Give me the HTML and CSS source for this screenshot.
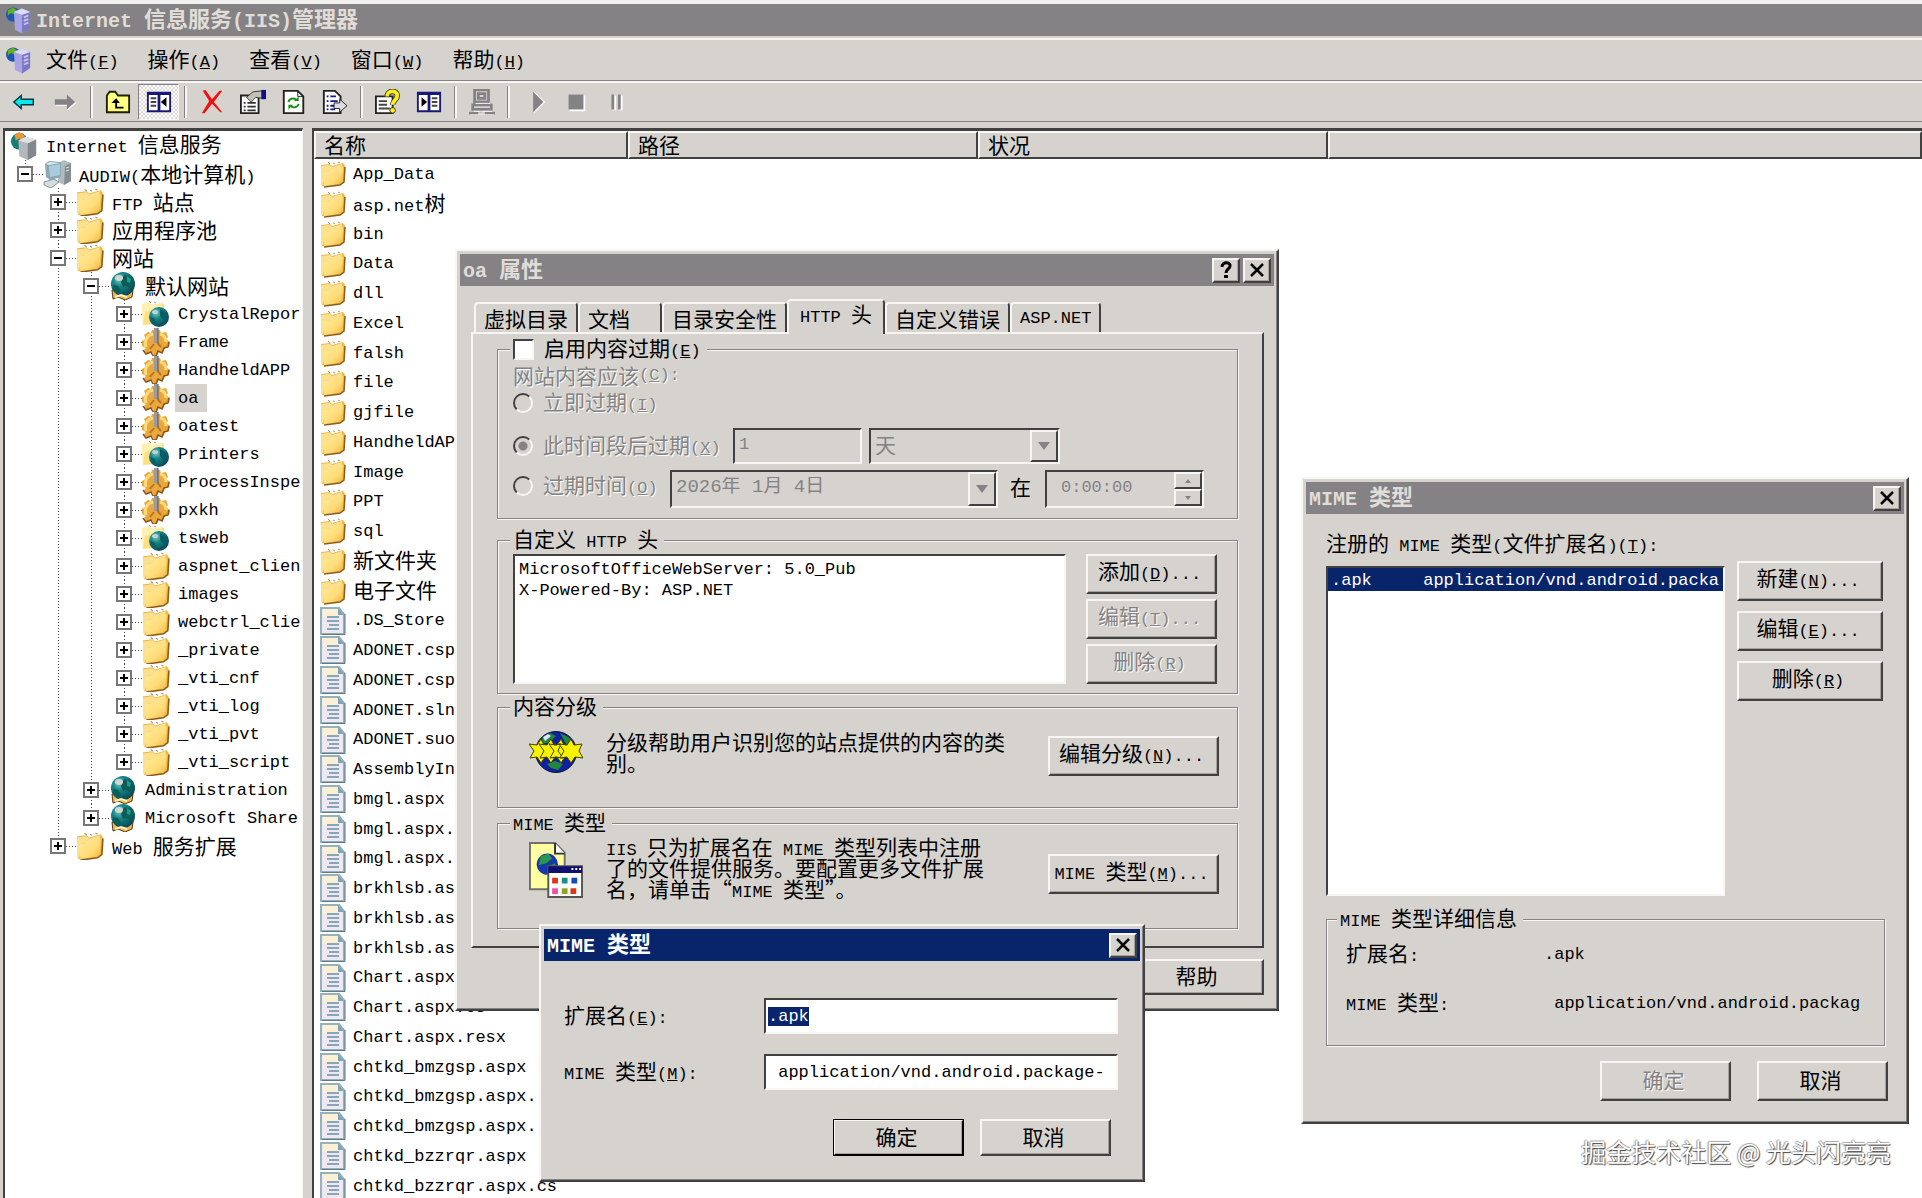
FILE: index.html
```html
<!DOCTYPE html>
<html lang="zh-CN">
<head>
<meta charset="utf-8">
<title>Internet 信息服务(IIS)管理器</title>
<link rel="stylesheet" href="styles.css">
</head>
<body>
<svg class="sprites" aria-hidden="true">
  <defs>
    <linearGradient id="gold" x1="0" y1="0" x2="1" y2="1"><stop offset="0" stop-color="#ffec9c"/><stop offset=".6" stop-color="#ffdc78"/><stop offset="1" stop-color="#f0b440"/></linearGradient>
    <radialGradient id="sea" cx=".35" cy=".3" r=".8"><stop offset="0" stop-color="#8cc4c0"/><stop offset=".35" stop-color="#14888a"/><stop offset="1" stop-color="#083c4c"/></radialGradient>
    <symbol id="folder" viewBox="0 0 26 26">
      <path d="M1 4l9-1 2 2 11-3 2 3-1 16-4 3L2 25z" fill="#f0b848"/>
      <path d="M1 5l9-1 2 2 10-3v5L6 11 3 24H1z" fill="#fbe090"/>
      <path d="M3 12l7-2 2-2 11-2-1 14-3 3-15 2z" fill="url(#gold)"/>
      <path d="M25 6l-1 15-4 3-16 2" fill="none" stroke="#8c5c18" stroke-width="1.500"/>
      <path d="M8 1l2 2M13 2l2 1M18 1l2 1" stroke="#a89868"/>
    </symbol>
    <symbol id="globe" viewBox="0 0 28 28">
      <path d="M3 18l1 9 5-2 7 3 7-3 1-7z" fill="#f0b848" stroke="#50381c"/>
      <circle cx="14" cy="12" r="12" fill="url(#sea)"/>
      <path d="M15 3l7 2 3 7-4 4-4-2-3 1-2-5zM4 13l5 1 3 5-4 2-4-4z" fill="#0c5c58"/>
      <path d="M18 4l4 3-1 4-3-1z" fill="#1c9c88"/>
      <ellipse cx="10" cy="6" rx="4" ry="3" fill="#cfd6d4"/>
      <path d="M6 25l6-2 6 2" stroke="#fff0c0" stroke-width="2" fill="none"/>
    </symbol>
    <symbol id="webfolder" viewBox="0 0 28 28">
      <path d="M0 4l8-1 3 2 9-2 2 1v17l-6 3-15 1z" fill="#ffdf80"/>
      <path d="M0 4l8-1 3 2 9-2v4L3 12l-2 12z" fill="#fff0b4"/><path d="M7 1l2 2M12 2l2 1" stroke="#a89868"/>
      <circle cx="17" cy="17" r="10" fill="url(#sea)"/>
      <path d="M18 9l6 4 2 5-4 3-4-5zM8 17l5 2 1 5-4-1z" fill="#0b5c64"/>
      <ellipse cx="13" cy="12" rx="3" ry="2" fill="#b8d4d4"/>
    </symbol>
    <symbol id="gear" viewBox="0 0 28 28">
      <path d="M10 2h8l1 3 5-1 2 5-2 2 4 3-1 5-4 1-2 5-4-2-2 5h-3l-2-4-5 2-3-4 2-2-4-2v-5l4-2-2-4 4-3 3 1z" fill="#e9a83c"/>
      <path d="M27 14l-1 5-4 1-2 5-4-2-2 5h-3l-2-4-5 2-3-4" fill="none" stroke="#8a5418" stroke-width="1.500"/>
      <path d="M4 19c-2-6 1-12 7-13M18 6c4 1 6 4 6 8" fill="none" stroke="#ffda7c" stroke-width="3"/>
      <path d="M14 13l5 6M12 16l-4 5" stroke="#b87420" stroke-width="2"/>
      <path d="M12 0h4v15h-4z" fill="#9a9aa4"/><path d="M16 0v15" stroke="#54545c"/>
    </symbol>
    <symbol id="file" viewBox="0 0 26 28">
      <path d="M1 1h18l5 6v20H1z" fill="#efe8f0" stroke="#93b2bc" stroke-width="2"/>
      <path d="M3 2h15v8H3z" fill="#fbf0d4"/><path d="M18 1v7h6z" fill="#7fa2b4"/>
      <path d="M7 10h12M7 14h12M9 18h10M7 22h12" stroke="#86a6ba" stroke-width="2"/>
      <path d="M25 7v20.500H2" fill="none" stroke="#607888"/>
    </symbol>
    <symbol id="server" viewBox="0 0 28 30">
      <circle cx="8" cy="9" r="8" fill="#1f56b0"/><path d="M2 4l6-3 5 4-4 4-3-2-4 3z" fill="#60b020"/>
      <path d="M9 6l9-4 9 4v18l-9 6-8-4z" fill="#a9a4e4"/><path d="M18 9l9-3v18l-9 6z" fill="#7d78c4"/><path d="M9 6l9-4 9 4-9 3z" fill="#dcdcfa"/>
      <path d="M20 12l5-2M20 16l5-2M20 20l5-2" stroke="#c8c6f0" stroke-width="2"/>
    </symbol>
    <symbol id="iisroot" viewBox="0 0 28 30">
      <circle cx="9" cy="10" r="9" fill="#167c78"/><path d="M4 3l5-3 6 4-3 5-3-2-4 2z" fill="#e89838"/>
      <path d="M8 9l8-4 11 3v17l-9 5-9-4z" fill="#b4b8bc"/><path d="M18 12l9-4v17l-9 5z" fill="#84888c"/><path d="M8 9l8-4 11 3-9 4z" fill="#dfe2e4"/>
    </symbol>
    <symbol id="pc" viewBox="0 0 28 28">
      <path d="M16 3l5-3 7 3v18l-7 4-6-3z" fill="#b2bcc0"/><path d="M22 6l6-3v18l-7 4z" fill="#848e92"/><path d="M23 8l3-1M23 11l3-1" stroke="#e4e8ea"/>
      <path d="M2 4l4-3 12 1v15l-11 3-4-3z" fill="#8ca8b4"/><path d="M6 6l11-2v11L7 17z" fill="#a8ccdc"/><path d="M3 4l4-2 10 1-11 2z" fill="#dce8ec"/>
      <path d="M1 22l10-3 5 3-8 6-7-3z" fill="#d4dce0" stroke="#8494a0"/>
    </symbol>
  </defs>
</svg>

<div class="app">
  <header class="app-title">
    <svg class="app-icon"><use href="#server"/></svg>
    <h1>Internet <span class="zh">信息服务</span>(IIS)<span class="zh">管理器</span></h1>
  </header>

  <nav class="menu">
    <svg class="app-icon"><use href="#server"/></svg>
    <button><span class="zh">文件</span>(<u>F</u>)</button>
    <button><span class="zh">操作</span>(<u>A</u>)</button>
    <button><span class="zh">查看</span>(<u>V</u>)</button>
    <button><span class="zh">窗口</span>(<u>W</u>)</button>
    <button><span class="zh">帮助</span>(<u>H</u>)</button>
  </nav>

  <div class="toolbar" role="toolbar">
    <button aria-label="后退"><svg viewBox="0 0 28 28"><path d="M3 14l8-7v4h13v6H11v4z" fill="#00e8f0" stroke="#00343c" stroke-width="1.500"/></svg></button>
    <button aria-label="前进"><svg viewBox="0 0 28 28"><path d="M26 15l-9-8v5H4v6h13v5z" fill="#fff"/><path d="M25 14l-9-8v5H3v6h13v5z" fill="#848284"/></svg></button>
    <i class="sep"></i>
    <button aria-label="向上"><svg viewBox="0 0 28 28"><path d="M2 25V7l3-4h6l3 4h12v18z" fill="#ffff84" stroke="#202000" stroke-width="2"/><path d="M7 15l5-5 4 5h-3v4h7v2h-9v-6z" fill="#000"/></svg></button>
    <button class="pressed" aria-label="显示树"><svg viewBox="0 0 28 28"><path d="M2 4h24v20H2z" fill="#fff" stroke="#181878" stroke-width="2"/><path d="M2 5h24M14 4v20" stroke="#181878" stroke-width="3"/><path d="M5 10h6M5 14h6M5 18h6" stroke="#444" stroke-width="2"/><path d="M22 9v10l-6-5z"/></svg></button>
    <i class="sep"></i>
    <button aria-label="删除"><svg viewBox="0 0 28 28"><path d="M4 2l3-1 7 10 8-9h3l-9 12 9 11h-2l-9-9-8 10H3l8-13z" fill="#f01010"/></svg></button>
    <button aria-label="属性"><svg viewBox="0 0 28 28"><path d="M1 7h19v19H1z" fill="#fff" stroke="#222" stroke-width="2"/><path d="M4 15h2M8 15h9M4 19h2M8 19h9M4 23h2M8 23h9" stroke="#333" stroke-width="2"/><path d="M7 9l7-6 10-1v8l-7-1-5 5z" fill="#c4c0b8" stroke="#333"/><path d="M23 1h5v10h-5z" fill="#101080"/></svg></button>
    <button aria-label="刷新"><svg viewBox="0 0 28 28"><path d="M3 2h15l6 6v18H3z" fill="#fff" stroke="#222" stroke-width="2"/><path d="M18 2v6h6" fill="none" stroke="#222"/><path d="M8 14c1-4 6-5 9-2M19 16c-1 4-6 5-9 2" fill="none" stroke="#149014" stroke-width="2"/><path d="M14 13h5V8zM13 17H8v5z" fill="#149014"/></svg></button>
    <button aria-label="导出列表"><svg viewBox="0 0 28 28"><path d="M2 2h12l6 6v18H2z" fill="#fff" stroke="#222" stroke-width="2"/><path d="M5 8h2M5 13h2M5 18h2M5 22h2M9 8h6M9 13h8M9 18h5M9 22h5" stroke="#181880" stroke-width="2"/><path d="M13 15h6v-4l8 7-8 7v-4h-6z" fill="#ddd" stroke="#222"/></svg></button>
    <i class="sep"></i>
    <button aria-label="帮助"><svg viewBox="0 0 28 28"><path d="M1 8h18v18H1z" fill="#fff" stroke="#222" stroke-width="2"/><path d="M4 13h9M4 17h9M4 21h12" stroke="#444" stroke-width="2"/><path d="M13 8c0-7 11-7 11-1 0 5-5 5-5 10" fill="none" stroke="#333" stroke-width="6"/><path d="M13 8c0-7 11-7 11-1 0 5-5 5-5 10" fill="none" stroke="#ffee10" stroke-width="4"/><circle cx="19" cy="23" r="3" fill="#ffee10" stroke="#333"/></svg></button>
    <button aria-label="操作窗格"><svg viewBox="0 0 28 28"><path d="M2 4h24v20H2z" fill="#fff" stroke="#181878" stroke-width="2"/><path d="M2 5h24M14 4v20" stroke="#181878" stroke-width="3"/><path d="M17 10h6M17 14h6M17 18h6" stroke="#444" stroke-width="2"/><path d="M6 9v10l6-5z"/></svg></button>
    <i class="sep"></i>
    <button aria-label="连接"><svg viewBox="0 0 28 28"><path d="M6 1h15v13H6zM4 17h20v5H4zM10 5h7v5h-7zM13 22v3M0 26h10M17 26h11" fill="none" stroke="#848284" stroke-width="3"/><path d="M7 15.500h16M5 24h20M1 28h26" stroke="#fff"/></svg></button>
    <i class="sep"></i>
    <button aria-label="启动"><svg viewBox="0 0 28 28"><path d="M13 3l12 11-12 12z" fill="#fff"/><path d="M12 3l11 11-11 11z" fill="#848284"/></svg></button>
    <button aria-label="停止"><svg viewBox="0 0 28 28"><path d="M7 7h17v17H7z" fill="#fff"/><path d="M6 6h16v16H6z" fill="#848284"/></svg></button>
    <button aria-label="暂停"><svg viewBox="0 0 28 28"><path d="M9 7h4v16H9zM16 7h4v16h-4z" fill="#fff"/><path d="M8 6h3v16H8zM15 6h3v16h-3z" fill="#848284"/></svg></button>
  </div>

  <main class="panes">
    <section class="tree">
      <div class="root"><svg class="ico"><use href="#iisroot"/></svg><span>Internet <span class="zh">信息服务</span></span></div>
      <ul class="top">
        <li>
          <div class="node"><i class="box minus"></i><svg class="ico"><use href="#pc"/></svg><span>AUDIW(<span class="zh">本地计算机</span>)</span></div>
          <ul>
            <li><div class="node"><i class="box"></i><svg class="ico"><use href="#folder"/></svg><span>FTP <span class="zh">站点</span></span></div></li>
            <li><div class="node"><i class="box"></i><svg class="ico"><use href="#folder"/></svg><span class="zh">应用程序池</span></div></li>
            <li>
              <div class="node"><i class="box minus"></i><svg class="ico"><use href="#folder"/></svg><span class="zh">网站</span></div>
              <ul>
                <li>
                  <div class="node"><i class="box minus"></i><svg class="ico"><use href="#globe"/></svg><span class="zh">默认网站</span></div>
                  <ul>
                    <li><div class="node"><i class="box"></i><svg class="ico"><use href="#webfolder"/></svg><span>CrystalRepor</span></div></li>
                    <li><div class="node"><i class="box"></i><svg class="ico"><use href="#gear"/></svg><span>Frame</span></div></li>
                    <li><div class="node"><i class="box"></i><svg class="ico"><use href="#gear"/></svg><span>HandheldAPP</span></div></li>
                    <li><div class="node"><i class="box"></i><svg class="ico"><use href="#gear"/></svg><span class="current">oa</span></div></li>
                    <li><div class="node"><i class="box"></i><svg class="ico"><use href="#gear"/></svg><span>oatest</span></div></li>
                    <li><div class="node"><i class="box"></i><svg class="ico"><use href="#webfolder"/></svg><span>Printers</span></div></li>
                    <li><div class="node"><i class="box"></i><svg class="ico"><use href="#gear"/></svg><span>ProcessInspe</span></div></li>
                    <li><div class="node"><i class="box"></i><svg class="ico"><use href="#gear"/></svg><span>pxkh</span></div></li>
                    <li><div class="node"><i class="box"></i><svg class="ico"><use href="#webfolder"/></svg><span>tsweb</span></div></li>
                    <li><div class="node"><i class="box"></i><svg class="ico"><use href="#folder"/></svg><span>aspnet_clien</span></div></li>
                    <li><div class="node"><i class="box"></i><svg class="ico"><use href="#folder"/></svg><span>images</span></div></li>
                    <li><div class="node"><i class="box"></i><svg class="ico"><use href="#folder"/></svg><span>webctrl_clie</span></div></li>
                    <li><div class="node"><i class="box"></i><svg class="ico"><use href="#folder"/></svg><span>_private</span></div></li>
                    <li><div class="node"><i class="box"></i><svg class="ico"><use href="#folder"/></svg><span>_vti_cnf</span></div></li>
                    <li><div class="node"><i class="box"></i><svg class="ico"><use href="#folder"/></svg><span>_vti_log</span></div></li>
                    <li><div class="node"><i class="box"></i><svg class="ico"><use href="#folder"/></svg><span>_vti_pvt</span></div></li>
                    <li><div class="node"><i class="box"></i><svg class="ico"><use href="#folder"/></svg><span>_vti_script</span></div></li>
                  </ul>
                </li>
                <li><div class="node"><i class="box"></i><svg class="ico"><use href="#globe"/></svg><span>Administration</span></div></li>
                <li><div class="node"><i class="box"></i><svg class="ico"><use href="#globe"/></svg><span>Microsoft Share</span></div></li>
              </ul>
            </li>
            <li><div class="node"><i class="box"></i><svg class="ico"><use href="#folder"/></svg><span>Web <span class="zh">服务扩展</span></span></div></li>
          </ul>
        </li>
      </ul>
    </section>

    <section class="list">
      <table>
        <colgroup><col class="col-name"><col class="col-path"><col class="col-path"><col></colgroup>
        <thead><tr><th class="zh">名称</th><th class="zh">路径</th><th class="zh">状况</th><th></th></tr></thead>
        <tbody>
          <tr><td><div class="entry"><svg><use href="#folder"/></svg>App_Data</div></td></tr>
          <tr><td><div class="entry"><svg><use href="#folder"/></svg><span>asp.net<span class="zh">树</span></span></div></td></tr>
          <tr><td><div class="entry"><svg><use href="#folder"/></svg>bin</div></td></tr>
          <tr><td><div class="entry"><svg><use href="#folder"/></svg>Data</div></td></tr>
          <tr><td><div class="entry"><svg><use href="#folder"/></svg>dll</div></td></tr>
          <tr><td><div class="entry"><svg><use href="#folder"/></svg>Excel</div></td></tr>
          <tr><td><div class="entry"><svg><use href="#folder"/></svg>falsh</div></td></tr>
          <tr><td><div class="entry"><svg><use href="#folder"/></svg>file</div></td></tr>
          <tr><td><div class="entry"><svg><use href="#folder"/></svg>gjfile</div></td></tr>
          <tr><td><div class="entry"><svg><use href="#folder"/></svg>HandheldAPP</div></td></tr>
          <tr><td><div class="entry"><svg><use href="#folder"/></svg>Image</div></td></tr>
          <tr><td><div class="entry"><svg><use href="#folder"/></svg>PPT</div></td></tr>
          <tr><td><div class="entry"><svg><use href="#folder"/></svg>sql</div></td></tr>
          <tr><td><div class="entry"><svg><use href="#folder"/></svg><span class="zh">新文件夹</span></div></td></tr>
          <tr><td><div class="entry"><svg><use href="#folder"/></svg><span class="zh">电子文件</span></div></td></tr>
          <tr><td><div class="entry"><svg><use href="#file"/></svg>.DS_Store</div></td></tr>
          <tr><td><div class="entry"><svg><use href="#file"/></svg>ADONET.csproj</div></td></tr>
          <tr><td><div class="entry"><svg><use href="#file"/></svg>ADONET.csproj</div></td></tr>
          <tr><td><div class="entry"><svg><use href="#file"/></svg>ADONET.sln</div></td></tr>
          <tr><td><div class="entry"><svg><use href="#file"/></svg>ADONET.suo</div></td></tr>
          <tr><td><div class="entry"><svg><use href="#file"/></svg>AssemblyInfo</div></td></tr>
          <tr><td><div class="entry"><svg><use href="#file"/></svg>bmgl.aspx</div></td></tr>
          <tr><td><div class="entry"><svg><use href="#file"/></svg>bmgl.aspx.cs</div></td></tr>
          <tr><td><div class="entry"><svg><use href="#file"/></svg>bmgl.aspx.resx</div></td></tr>
          <tr><td><div class="entry"><svg><use href="#file"/></svg>brkhlsb.aspx</div></td></tr>
          <tr><td><div class="entry"><svg><use href="#file"/></svg>brkhlsb.aspx</div></td></tr>
          <tr><td><div class="entry"><svg><use href="#file"/></svg>brkhlsb.aspx</div></td></tr>
          <tr><td><div class="entry"><svg><use href="#file"/></svg>Chart.aspx</div></td></tr>
          <tr><td><div class="entry"><svg><use href="#file"/></svg>Chart.aspx.cs</div></td></tr>
          <tr><td><div class="entry"><svg><use href="#file"/></svg>Chart.aspx.resx</div></td></tr>
          <tr><td><div class="entry"><svg><use href="#file"/></svg>chtkd_bmzgsp.aspx</div></td></tr>
          <tr><td><div class="entry"><svg><use href="#file"/></svg>chtkd_bmzgsp.aspx.</div></td></tr>
          <tr><td><div class="entry"><svg><use href="#file"/></svg>chtkd_bmzgsp.aspx.</div></td></tr>
          <tr><td><div class="entry"><svg><use href="#file"/></svg>chtkd_bzzrqr.aspx</div></td></tr>
          <tr><td><div class="entry"><svg><use href="#file"/></svg>chtkd_bzzrqr.aspx.cs</div></td></tr>
        </tbody>
      </table>
    </section>
  </main>
</div>

<section class="dialog props" role="dialog" aria-label="oa 属性">
  <header class="caption">
    <h2>oa <span class="zh">属性</span></h2>
    <button class="cap-btn" aria-label="帮助"><svg viewBox="0 0 20 20"><path d="M6 7c0-6 9-5 8-1 0 3-4 3-4 7" fill="none" stroke="#000" stroke-width="3"/><path d="M8 15h4v3H8z"/></svg></button>
    <button class="cap-btn" aria-label="关闭"><svg viewBox="0 0 20 20"><path d="M4 4l12 12M16 4L4 16" stroke="#000" stroke-width="2.500"/></svg></button>
  </header>
  <div class="props-body">
    <div class="tabs" role="tablist">
      <button role="tab" class="zh">虚拟目录</button>
      <button role="tab" class="zh">文档</button>
      <button role="tab" class="zh">目录安全性</button>
      <button role="tab" class="active">HTTP <span class="zh">头</span></button>
      <button role="tab" class="zh">自定义错误</button>
      <button role="tab">ASP.NET</button>
    </div>
    <div class="page">
      <fieldset class="expiry">
        <legend><label class="choice"><input type="checkbox"><span><span class="zh">启用内容过期</span>(<u>E</u>)</span></label></legend>
        <div class="line off"><span class="zh">网站内容应该</span><span>(<u>C</u>):</span></div>
        <div class="line off"><label class="choice"><input type="radio" name="expire" disabled><span><span class="zh">立即过期</span>(<u>I</u>)</span></label></div>
        <div class="line fields after">
          <label class="choice off"><input type="radio" name="expire" checked disabled><span><span class="zh">此时间段后过期</span>(<u>X</u>)</span></label>
          <input class="sunken amount" type="text" value="1" aria-label="数量" disabled>
          <span class="sunken combo unit"><select aria-label="单位" disabled><option>天</option></select><i class="drop"></i></span>
        </div>
        <div class="line fields on">
          <label class="choice off"><input type="radio" name="expire" disabled><span><span class="zh">过期时间</span>(<u>O</u>)</span></label>
          <span class="sunken combo date"><input type="text" value="2026年 1月 4日" aria-label="日期" disabled><i class="drop"></i></span>
          <span class="zh at">在</span>
          <span class="sunken combo time"><input type="text" value="0:00:00" aria-label="时间" disabled><span class="spin"><i></i><i></i></span></span>
        </div>
      </fieldset>

      <fieldset class="headers">
        <legend><span class="zh">自定义</span> HTTP <span class="zh">头</span></legend>
        <ul class="sunken headers-list"><li>MicrosoftOfficeWebServer: 5.0_Pub</li><li>X-Powered-By: ASP.NET</li></ul>
        <div class="stack">
          <button class="btn"><span class="zh">添加</span>(<u>D</u>)...</button>
          <button class="btn" disabled><span class="zh">编辑</span>(<u>T</u>)...</button>
          <button class="btn" disabled><span class="zh">删除</span>(<u>R</u>)</button>
        </div>
      </fieldset>

      <fieldset class="info rating">
        <legend class="zh">内容分级</legend>
        <svg class="big" viewBox="0 0 54 42"><circle cx="27" cy="21" r="20.500" fill="#1020a0" stroke="#101830"/><path d="M13 7l8-5 6 3-6 6-8 2zM31 2l10 5 4 8-8-2zM18 33l8-3 8 3-5 6-7-2z" fill="#20883c"/><path d="M14 6l5-3 3 2-6 5z" fill="#d8e8f4"/><path d="M0 13l8 1 4-6 3 6 7-1-3 7 5 7-8-1-4 6-4-6-7 1 4-7z" fill="#f8f400" stroke="#404000"/><path d="M10 13l8 1 4-6 3 6 7-1-3 7 5 7-8-1-4 6-4-6-7 1 4-7zM20 13l8 1 4-6 3 6 7-1-3 7 5 7-8-1-4 6-4-6-7 1 4-7z" fill="#f8f400" stroke="#404000"/><path d="M30 13l8 1 4-6 3 6 8-1-3 7 4 7-8-1-4 6-4-6-7 1 4-7z" fill="#f8f400" stroke="#404000"/></svg>
        <p class="zh">分级帮助用户识别您的站点提供的内容的类<br>别。</p>
        <button class="btn wide"><span class="zh">编辑分级</span>(<u>N</u>)...</button>
      </fieldset>

      <fieldset class="info mime">
        <legend>MIME <span class="zh">类型</span></legend>
        <svg class="big" viewBox="0 0 56 58"><path d="M1 1h26l10 10v38H1z" fill="#ffffa0" stroke="#707070" stroke-width="2"/><path d="M27 1v11h10" fill="#fff" stroke="#333" stroke-width="2"/><circle cx="19" cy="23" r="11" fill="#1838a8"/><path d="M12 15l8-3 4 5-6 5-8 2zM20 25l7-3 1 6-5 4z" fill="#2a9450"/><path d="M20 25h35v32H20z" fill="#fff" stroke="#555" stroke-width="2"/><path d="M20 25h35v7H20z" fill="#101070"/><path d="M44 28h2M48 28h2M52 28h2" stroke="#fff" stroke-width="2"/><path d="M24 37h6v6h-6zM43 48h6v6h-6z" fill="#d83818"/><path d="M34 37h6v6h-6z" fill="#189088"/><path d="M44 37h6v6h-6z" fill="#1848c0"/><path d="M24 48h6v6h-6z" fill="#e850a8"/><path d="M34 48h6v6h-6z" fill="#90a020"/></svg>
        <p class="zh"><span class="en">IIS </span>只为扩展名在<span class="en"> MIME </span>类型列表中注册<br>了的文件提供服务。要配置更多文件扩展<br>名，请单击“<span class="en">MIME </span>类型”。</p>
        <button class="btn wide">MIME <span class="zh">类型</span>(<u>M</u>)...</button>
      </fieldset>
    </div>
    <div class="actions"><button class="btn zh">帮助</button></div>
  </div>
</section>

<section class="dialog types" role="dialog" aria-label="MIME 类型">
  <header class="caption">
    <h2>MIME <span class="zh">类型</span></h2>
    <button class="cap-btn" aria-label="关闭"><svg viewBox="0 0 20 20"><path d="M4 4l12 12M16 4L4 16" stroke="#000" stroke-width="2.500"/></svg></button>
  </header>
  <div class="types-body">
    <div class="line"><span><span class="zh">注册的</span> MIME <span class="zh">类型</span>(<span class="zh">文件扩展名</span>)(<u>T</u>):</span></div>
    <div class="types-row">
      <ul class="sunken types-list"><li><span>.apk</span><span> application/vnd.android.packa</span></li></ul>
      <div class="stack">
        <button class="btn"><span class="zh">新建</span>(<u>N</u>)...</button>
        <button class="btn"><span class="zh">编辑</span>(<u>E</u>)...</button>
        <button class="btn"><span class="zh">删除</span>(<u>R</u>)</button>
      </div>
    </div>
    <fieldset class="details">
      <legend>MIME <span class="zh">类型详细信息</span></legend>
      <div class="line pair"><span><span class="zh">扩展名</span>:</span><span>.apk</span></div>
      <div class="line pair"><span>MIME <span class="zh">类型</span>:</span><span> application/vnd.android.packag</span></div>
    </fieldset>
    <div class="actions">
      <button class="btn zh" disabled>确定</button>
      <button class="btn zh">取消</button>
    </div>
  </div>
</section>

<section class="dialog edit" role="dialog" aria-label="MIME 类型">
  <header class="caption focused">
    <h2>MIME <span class="zh">类型</span></h2>
    <button class="cap-btn" aria-label="关闭"><svg viewBox="0 0 20 20"><path d="M4 4l12 12M16 4L4 16" stroke="#000" stroke-width="2.500"/></svg></button>
  </header>
  <form class="edit-body">
    <div class="field"><label for="ext"><span class="zh">扩展名</span>(<u>E</u>):</label><input class="sunken" id="ext" type="text" value=".apk"></div>
    <div class="field"><label for="type">MIME <span class="zh">类型</span>(<u>M</u>):</label><input class="sunken" id="type" type="text" value=" application/vnd.android.package-"></div>
    <div class="actions">
      <button type="button" class="btn zh default">确定</button>
      <button type="button" class="btn zh">取消</button>
    </div>
  </form>
</section>

<p class="watermark">掘金技术社区 @ 光头闪亮亮</p>
<script src="main.js"></script>
</body>
</html>
```

FILE: main.js
```js
// The extension box opens with its whole value selected.
const ext = document.getElementById("ext");
ext.focus();
ext.select();
```

FILE: styles.css
```css
:root {
  --face: #d6d3ce;
  --light: #f7f6f2;
  --shade: #848284;
  --dark: #424142;
  --navy: #08246b;
}

* { box-sizing: border-box; }

body {
  margin: 0;
  height: 100vh;
  overflow: hidden;
  position: relative;
  background: #f0f0ee;
  color: #000;
  font: 17px/21px "Liberation Mono", "Noto Sans CJK SC", monospace;
}

button, input, select { font: inherit; color: inherit; margin: 0; }
button { background: none; border: 0; padding: 0; white-space: nowrap; }
h1, h2, p, ul { margin: 0; padding: 0; }
ul { list-style: none; }
.zh { font-family: "Noto Sans CJK SC", sans-serif; font-size: 21px; font-weight: 400; }
.sprites { position: absolute; width: 0; height: 0; }

/* main window */
.app {
  height: 100vh;
  padding-top: 4px;
  display: flex;
  flex-direction: column;
  background: linear-gradient(#f0f0ee 4px, var(--face) 4px);
}
.app-title {
  flex: none;
  height: 32px;
  padding-left: 6px;
  display: flex;
  align-items: center;
  gap: 5px;
  background: var(--shade);
  color: #e0ddd8;
}
.app-icon { width: 25px; height: 28px; flex: none; }
h1, h2 { padding-bottom: 2px; font-size: 20px; line-height: 28px; font-weight: 700; white-space: pre; }
h1 .zh, h2 .zh { font-size: 22px; font-weight: 700; }

.menu {
  flex: none;
  height: 43px;
  margin-top: 2px;
  padding-left: 6px;
  display: flex;
  align-items: center;
  gap: 29px;
  border-top: 2px solid var(--light);
  border-bottom: 1px solid var(--shade);
}
.menu .app-icon { margin-right: -14px; }

.toolbar {
  flex: none;
  height: 41px;
  padding-left: 3px;
  display: flex;
  align-items: center;
  border-top: 2px solid var(--light);
  border-bottom: 1px solid var(--shade);
}
.toolbar button { width: 41px; height: 36px; display: grid; place-items: center; }
.toolbar svg { width: 26px; height: 26px; }
.toolbar .pressed {
  border: 1px solid;
  border-color: var(--shade) var(--light) var(--light) var(--shade);
  background: repeating-conic-gradient(#fff 0 25%, #dedbd6 0 50%) 0 0 / 4px 4px;
}
.sep { width: 12px; height: 32px; flex: none; background: linear-gradient(90deg, transparent 5px, var(--shade) 5px 6px, var(--light) 6px 8px, transparent 8px); }

.panes {
  flex: 1;
  min-height: 0;
  margin-top: 6px;
  padding-left: 3px;
  display: grid;
  grid-template-columns: 300px minmax(0, 1fr);
  column-gap: 9px;
}
.tree, .list {
  overflow: hidden;
  background: #fff;
  border: solid var(--dark);
  border-width: 3px 0 0 2px;
}

/* tree */
.tree { white-space: nowrap; border-right: 1px solid var(--light); }
.root { height: 29px; padding-left: 5px; display: flex; align-items: center; gap: 8px; }
.tree ul { padding-left: 33px; }
.tree .top { padding-left: 12px; }
.tree li { background: repeating-linear-gradient(#444 0 1px, #fff 1px 3px) 8px 0 / 1px 100% no-repeat; }
.tree li:last-child { background-size: 1px 14px; }
.node {
  height: 28px;
  display: flex;
  align-items: center;
  background: repeating-linear-gradient(90deg, #444 0 1px, #fff 1px 3px) 16px 14px / 10px 1px no-repeat;
}
.node .ico { margin: 0 5px 0 10px; }
.ico { width: 28px; height: 28px; flex: none; }
.node > span { line-height: 26px; padding: 2px 0 0 3px; }
.node > .zh { padding-top: 0; padding-bottom: 2px; }
.node .current { background: var(--face); padding-right: 9px; }
.box {
  width: 16px;
  height: 16px;
  flex: none;
  border: 2px solid #777;
  background:
    linear-gradient(#000, #000) center / 8px 2px no-repeat,
    linear-gradient(#000, #000) center / 2px 8px no-repeat,
    #fff;
}
.box.minus { background: linear-gradient(#000, #000) center / 8px 2px no-repeat, #fff; }

/* file list */
table { width: 100%; table-layout: fixed; border-collapse: separate; border-spacing: 0; }
.col-name { width: 314px; }
.col-path { width: 350px; }
th {
  height: 28px;
  padding: 0 0 2px 8px;
  text-align: left;
  line-height: 22px;
  background: var(--face);
  border: 2px solid;
  border-color: var(--light) var(--dark) var(--dark) var(--light);
}
td { height: 30px; padding: 0; }
tbody tr:nth-child(4n) td { height: 29px; }
.entry { height: 29px; padding-left: 6px; display: flex; align-items: center; gap: 7px; white-space: nowrap; }
.entry > .zh { padding-bottom: 4px; }
.entry svg { width: 26px; height: 28px; flex: none; }

/* dialogs */
.dialog {
  position: absolute;
  padding: 3px;
  background: var(--face);
  border: 2px solid;
  border-color: var(--light) var(--dark) var(--dark) var(--light);
  box-shadow: inset -1px -1px 0 var(--shade);
}
.props { left: 455px; top: 249px; width: 824px; }
.types { left: 1301px; top: 477px; width: 608px; }
.edit { left: 539px; top: 924px; width: 606px; }

.caption { height: 32px; padding: 0 3px; display: flex; align-items: center; gap: 3px; background: var(--shade); color: #e0ddd8; }
.caption.focused { background: var(--navy); color: #fff; }
.caption h2 { flex: 1; }
.cap-btn, .btn {
  background: var(--face);
  border: 2px solid;
  border-color: var(--light) var(--dark) var(--dark) var(--light);
  box-shadow: inset -1px -1px 0 #a5a29c;
}
.cap-btn { width: 28px; height: 25px; display: grid; place-items: center; }
.cap-btn svg { width: 20px; height: 20px; }
.btn { width: 131px; height: 40px; padding: 0 4px 3px 0; color: #000; }
.btn.wide { width: 171px; flex: none; }
.btn.default { outline: 1px solid #000; outline-offset: -1px; border-right-color: #000; border-bottom-color: #000; }
.btn:disabled, .off { color: var(--shade); text-shadow: 1px 1px 0 #fff; }
.stack { display: flex; flex-direction: column; }
.actions { display: flex; justify-content: flex-end; }
.line { height: 28px; display: flex; align-items: center; white-space: pre; }

.sunken {
  background: #fff;
  border: 2px solid;
  border-color: var(--dark) var(--light) var(--light) var(--dark);
  border-radius: 0;
  outline: 0;
}

fieldset {
  min-width: 0;
  margin: 0;
  padding: 0 20px 0 15px;
  border: 1px solid var(--shade);
  box-shadow: 1px 1px 0 var(--light), inset 1px 1px 0 var(--light);
}
legend { height: 24px; margin-left: -3px; padding: 0 6px 0 3px; line-height: 20px; background: var(--face); white-space: pre; }

/* property sheet */
.props-body { padding: 13px 10px 11px 11px; }
.tabs { height: 33px; padding-left: 3px; display: flex; align-items: flex-end; }
.tabs button {
  min-width: 84px;
  height: 30px;
  padding: 0 8px;
  text-align: left;
  border: 2px solid;
  border-color: var(--light) var(--dark) transparent var(--light);
  border-bottom: 0;
  border-radius: 4px 4px 0 0;
}
.tabs .active { height: 35px; margin-bottom: -2px; padding: 0 11px 5px; background: var(--face); position: relative; }
.page { padding: 3px 24px 17px; border: 2px solid; border-color: var(--light) var(--dark) var(--dark) var(--light); }
.page + .actions { margin-top: 11px; }
.page + .actions .btn { height: 36px; }

.choice { display: flex; align-items: center; gap: 10px; }
.choice input { appearance: none; width: 21px; height: 21px; border: 2px solid; border-color: var(--dark) var(--light) var(--light) var(--dark); background: #fff; }
.choice input[type="radio"] { width: 20px; height: 20px; border-radius: 50%; background: var(--face); }
.choice input[type="radio"]:checked { background: radial-gradient(circle, var(--shade) 4px, transparent 5px) var(--face); }
.expiry .sunken { background: var(--face); }
.expiry :disabled { color: var(--shade); opacity: 1; }
.expiry { padding-bottom: 10px; }
.fields.after { height: 36px; margin-top: 11px; }
.fields.on { height: 38px; margin-top: 6px; }
.fields .sunken { height: 100%; }
.on .choice, .on .at { padding-bottom: 6px; }
.after .choice { width: 220px; }
.on .choice { width: 157px; }
.amount { width: 129px; padding: 0 4px 4px; }
.combo { display: flex; align-items: stretch; }
.combo select, .combo input { flex: 1; min-width: 0; width: 0; appearance: none; border: 0; background: none; padding: 0 4px 4px; }
.unit { width: 191px; margin-left: 7px; }
.unit select { font-family: "Noto Sans CJK SC", sans-serif; font-size: 21px; }
.date { width: 328px; }
.date input { font-size: 19px; }
.at { width: 47px; padding-left: 12px; }
.time { width: 159px; }
.time input { padding-left: 14px; }
.drop, .spin i {
  width: 28px;
  border: 2px solid;
  border-color: var(--light) var(--dark) var(--dark) var(--light);
  display: grid;
  place-items: center;
}
.drop::after { content: ""; border: 6px solid transparent; border-top: 8px solid var(--shade); border-bottom: 0; }
.spin { display: flex; flex-direction: column; }
.spin i { flex: 1; }
.spin i::after { content: ""; border: 3px solid transparent; border-top: 0; border-bottom: 4px solid var(--shade); }
.spin i + i::after { border-bottom: 0; border-top: 4px solid var(--shade); }

.headers { margin-top: 9px; padding-top: 2px; padding-bottom: 9px; display: flex; gap: 20px; }
.headers-list { flex: 1; height: 130px; padding: 3px 4px; white-space: pre; }
.headers .stack { gap: 5px; }
.info { display: flex; align-items: flex-start; padding-right: 18px; }
.info p { flex: 1; line-height: 21px; white-space: pre; }
.info .en { font: 17px/1px "Liberation Mono", monospace; }
.info .big { width: 54px; margin: 0 23px 0 16px; flex: none; }
.rating { margin-top: 1px; padding-top: 12px; padding-bottom: 31px; }
.rating .big { height: 42px; }
.rating .btn { margin-top: 5px; }
.mime { margin-top: 3px; padding-top: 1px; padding-bottom: 29px; }
.mime .big { height: 56px; margin-top: 6px; }
.mime .btn { margin-top: 18px; }

/* registered types */
.types-body { padding: 16px 16px 18px 20px; }
.types-row { margin-top: 3px; display: flex; gap: 12px; padding-right: 5px; }
.types-list { flex: 1; min-width: 0; height: 330px; margin-top: 5px; overflow: hidden; }
.types-list li { display: flex; padding-top: 2px; white-space: pre; background: var(--navy); color: #fff; }
.types-list span:first-child { width: 85px; flex: none; padding-left: 3px; }
.types-row .stack { gap: 10px; }
.types-row .btn { width: 146px; }
.details { margin: 11px 3px 0 0; padding: 9px 14px 28px 19px; }
.details legend { margin-left: -9px; }
.pair + .pair { margin-top: 21px; }
.pair > span:first-child { width: 198px; flex: none; }
.types-body .actions { margin-top: 15px; gap: 26px; }

/* edit type */
.edit-body { padding: 37px 22px 21px 20px; }
.field { display: flex; align-items: center; }
.field + .field { margin-top: 20px; }
.field label { width: 200px; flex: none; white-space: pre; }
.field input { flex: 1; min-width: 0; height: 36px; padding: 0 2px; }
.field ::selection { background: var(--navy); color: #fff; }
.edit-body .actions { margin-top: 29px; padding-right: 7px; gap: 16px; }
.edit-body .btn { height: 37px; }

.watermark {
  position: absolute;
  right: 31px;
  bottom: 31px;
  font: 25px/32px "Noto Sans CJK SC", sans-serif;
  color: #fff;
  text-shadow: 1px 1px 1px #444, -1px 0 1px #999, 0 -1px 1px #aaa;
  white-space: nowrap;
}
```
